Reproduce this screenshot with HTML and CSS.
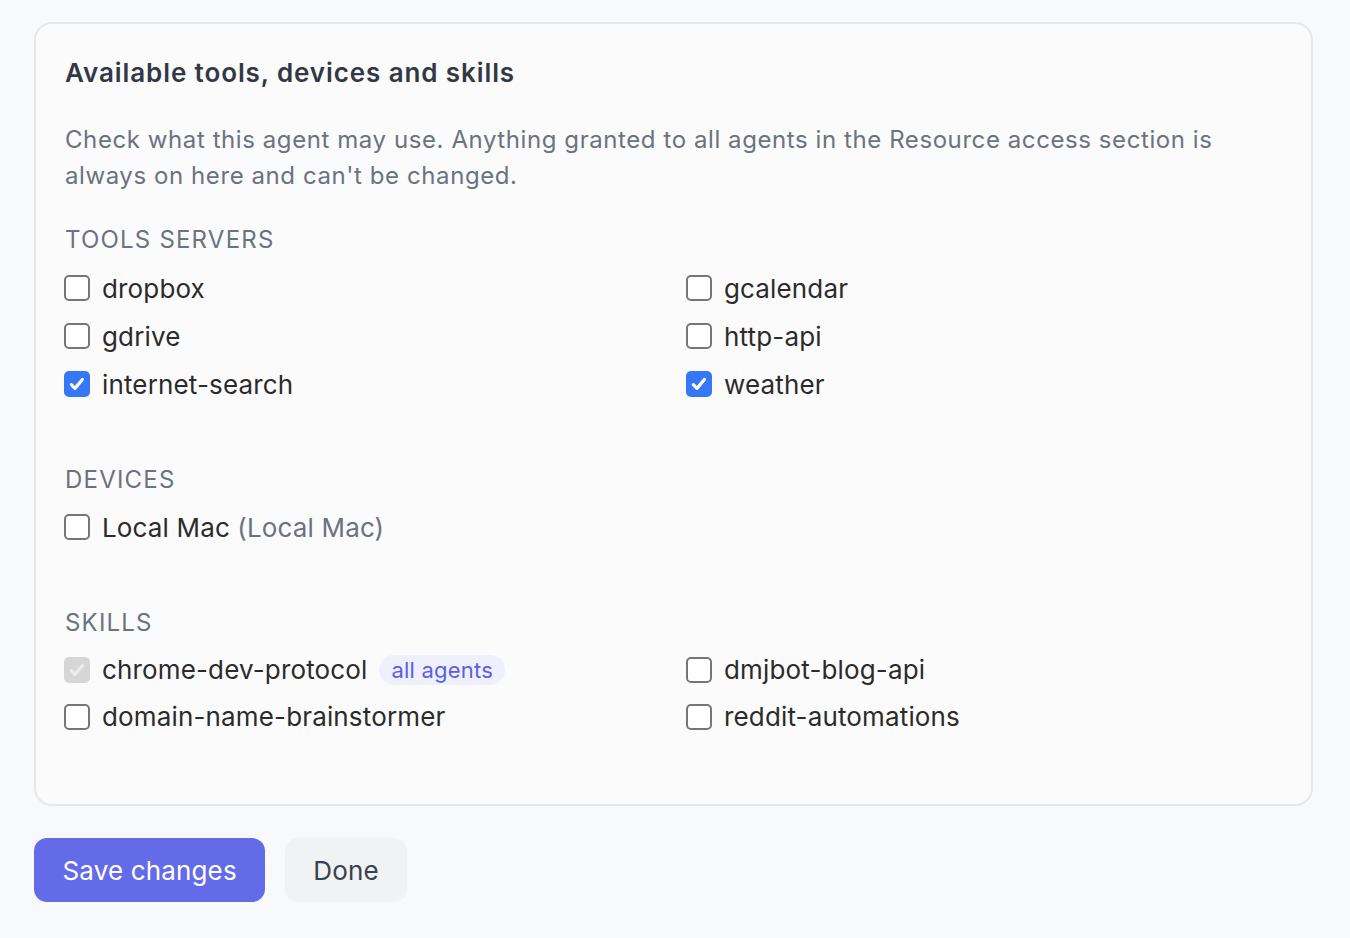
FILE: index.html
```html
<!DOCTYPE html>
<html lang="en">

<head>
    <meta charset="UTF-8">
    <title>Agent access</title>
    <link rel="stylesheet" href="styles.css">
</head>

<body>

    <!-- Access card -->
    <section class="card">
        <h2>Available tools, devices and skills</h2>
        <p class="desc">Check what this agent may use. Anything granted to all agents in the Resource access section is always on here and can't be changed.</p>

        <div class="group">
            <h3>Tools servers</h3>
            <div class="grid">
                <label class="item"><input type="checkbox"><span>dropbox</span></label>
                <label class="item"><input type="checkbox"><span>gcalendar</span></label>
                <label class="item"><input type="checkbox"><span>gdrive</span></label>
                <label class="item"><input type="checkbox"><span>http-api</span></label>
                <label class="item"><input type="checkbox" checked><span>internet-search</span></label>
                <label class="item"><input type="checkbox" checked><span>weather</span></label>
            </div>
        </div>

        <div class="group">
            <h3>Devices</h3>
            <div class="grid">
                <label class="item"><input type="checkbox"><span>Local Mac <span class="muted">(Local Mac)</span></span></label>
            </div>
        </div>

        <div class="group">
            <h3>Skills</h3>
            <div class="grid">
                <label class="item"><input type="checkbox" checked disabled><span>chrome-dev-protocol</span><span class="badge">all agents</span></label>
                <label class="item"><input type="checkbox"><span>dmjbot-blog-api</span></label>
                <label class="item"><input type="checkbox"><span>domain-name-brainstormer</span></label>
                <label class="item"><input type="checkbox"><span>reddit-automations</span></label>
            </div>
        </div>
    </section>

    <!-- Actions -->
    <div class="actions">
        <button class="btn primary">Save changes</button>
        <button class="btn secondary">Done</button>
    </div>

</body>

</html>
```

FILE: styles.css
```css
/* General Reset */
* {
    margin: 0;
    padding: 0;
    box-sizing: border-box;
}

body {
    font-family: 'Inter', 'Noto Sans', sans-serif;
    background-color: #f8f9fb;
    color: #2b2b2b;
    padding: 22px 37px 0 34px;
}

/* Card */
.card {
    background: #fbfbfc;
    border: 2px solid #e6e7eb;
    border-radius: 18px;
    padding: 33px 28px 64px;
}

.card h2 {
    font-size: 26px;
    line-height: 32px;
    font-weight: 600;
    letter-spacing: 0.9px;
    color: #323844;
    padding-left: 1px;
}

.desc {
    margin-top: 33px;
    font-size: 24px;
    line-height: 36px;
    letter-spacing: 0.58px;
    color: #6b7280;
    padding-left: 1px;
}

/* Groups */
.group {
    margin-top: 57px;
}

.desc + .group {
    margin-top: 31px;
}

.group h3 {
    font-size: 24px;
    line-height: 30px;
    font-weight: 400;
    letter-spacing: 1.2px;
    text-transform: uppercase;
    color: #6b7280;
    margin-bottom: 8px;
    padding-left: 1px;
}

.desc + .group h3 {
    margin-bottom: 9px;
}

.grid {
    display: grid;
    grid-template-columns: 1fr 1fr;
    column-gap: 25px;
}

.item {
    display: flex;
    align-items: center;
    gap: 12px;
    height: 48px;
    font-size: 26px;
    letter-spacing: 0.15px;
}

.group:last-child .item {
    height: 47px;
}

/* Checkbox */
.item input {
    appearance: none;
    -webkit-appearance: none;
    width: 26px;
    height: 26px;
    border: 2px solid #767676;
    border-radius: 5px;
    background: #fff;
    flex-shrink: 0;
}

.item input:checked {
    border-color: #3478f6;
    background: #3478f6 url("data:image/svg+xml,%3Csvg xmlns='http://www.w3.org/2000/svg' viewBox='0 0 26 26'%3E%3Cpath d='M6.3 13.8l4.3 4.4 8.8-10.6' fill='none' stroke='white' stroke-width='3.8' stroke-linecap='round' stroke-linejoin='round'/%3E%3C/svg%3E") center / 100% no-repeat;
}

.item input:checked:disabled {
    border-color: #d6d6d6;
    background-color: #d6d6d6;
    background-image: url("data:image/svg+xml,%3Csvg xmlns='http://www.w3.org/2000/svg' viewBox='0 0 26 26'%3E%3Cpath d='M6.3 13.8l4.3 4.4 8.8-10.6' fill='none' stroke='%23ececec' stroke-width='3.8' stroke-linecap='round' stroke-linejoin='round'/%3E%3C/svg%3E");
}

.muted {
    color: #6b7280;
}

.badge {
    font-size: 22px;
    line-height: 30px;
    padding: 0 12px;
    border-radius: 15px;
    background: #eef0fe;
    color: #5b5fe3;
    letter-spacing: 0.2px;
}

/* Actions */
.actions {
    display: flex;
    gap: 20px;
    margin-top: 32px;
}

.btn {
    font-family: inherit;
    font-size: 26px;
    letter-spacing: 0.15px;
    height: 64px;
    border: none;
    border-radius: 13px;
    padding: 0 28px;
}

.primary {
    background: #646be8;
    color: #fff;
    padding: 0 28.5px;
}

.secondary {
    background: #f1f2f4;
    color: #374151;
}
```
